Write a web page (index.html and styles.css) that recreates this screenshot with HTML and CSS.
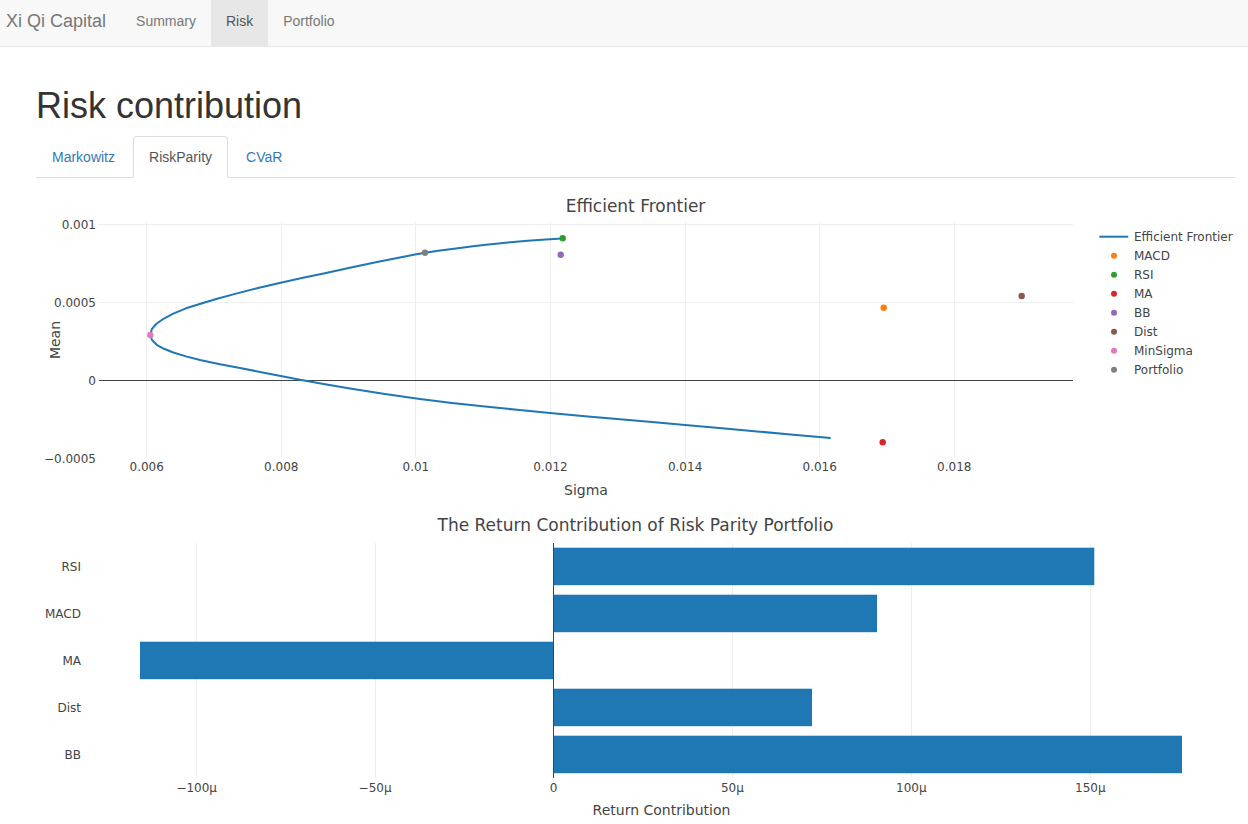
FILE: index.html
```html
<!DOCTYPE html>
<html lang="en">
<head>
<meta charset="utf-8">
<title>Xi Qi Capital - Risk</title>
<link rel="stylesheet" href="styles.css">
</head>
<body>
<nav class="navbar">
  <a class="brand" href="#">Xi Qi Capital</a>
  <ul class="nav-links">
    <li><a href="#">Summary</a></li>
    <li class="active"><a href="#">Risk</a></li>
    <li><a href="#">Portfolio</a></li>
  </ul>
</nav>
<main class="content">
  <h1 class="page-title">Risk contribution</h1>
  <ul class="tabs">
    <li><a href="#">Markowitz</a></li>
    <li class="active"><a href="#">RiskParity</a></li>
    <li><a href="#">CVaR</a></li>
  </ul>

  <svg class="chart chart-frontier" width="1199" height="332" viewBox="0 0 1199 332">
    <text class="chart-title" x="599.5" y="33.5" text-anchor="middle">Efficient Frontier</text>
    <g class="grid">
      <line x1="110.5" y1="44" x2="110.5" y2="280"/>
      <line x1="245.5" y1="44" x2="245.5" y2="280"/>
      <line x1="379.5" y1="44" x2="379.5" y2="280"/>
      <line x1="514.5" y1="44" x2="514.5" y2="280"/>
      <line x1="649.5" y1="44" x2="649.5" y2="280"/>
      <line x1="783.5" y1="44" x2="783.5" y2="280"/>
      <line x1="918.5" y1="44" x2="918.5" y2="280"/>
      <line x1="63" y1="46.5" x2="1037" y2="46.5"/>
      <line x1="63" y1="124.5" x2="1037" y2="124.5"/>
    </g>
    <line class="zero" x1="63" y1="202.5" x2="1037" y2="202.5"/>
    <g class="ticks" text-anchor="end">
      <text x="60" y="51">0.001</text>
      <text x="60" y="129">0.0005</text>
      <text x="60" y="207">0</text>
      <text x="60" y="285">−0.0005</text>
    </g>
    <g class="ticks" text-anchor="middle">
      <text x="110.7" y="293">0.006</text>
      <text x="245.3" y="293">0.008</text>
      <text x="379.9" y="293">0.01</text>
      <text x="514.5" y="293">0.012</text>
      <text x="649.1" y="293">0.014</text>
      <text x="783.7" y="293">0.016</text>
      <text x="918.3" y="293">0.018</text>
    </g>
    <text class="axis-title" x="550" y="316.5" text-anchor="middle">Sigma</text>
    <text class="axis-title" x="0" y="0" text-anchor="middle" transform="translate(24 162) rotate(-90)">Mean</text>

    <polyline class="frontier" points="526,60.5 510,61.4 495,62.5 480,63.7 465,65.2 450,66.8 435,68.6 420,70.5 404,72.5 389,74.7 379,76.5 360,80.3 341,84 315,89.5 290,95 267,99.8 244.7,104.7 222,110 200,115.6 182,120.5 164.6,125.8 150,130.3 137.3,135.6 127.4,140.8 120.2,146 115.8,151.2 114.3,157 116,162 120.7,166.8 128,170.8 137.3,174.5 150,178.4 164,182 184,186.2 204,190 224,193.9 244.7,198 264,201.8 289,206.3 314,210.5 349,216.1 384,221 416,225 449,228.5 481,231.8 514,235 549,238.3 584,241.3 616,244.1 649,247 686,250.3 724,253.7 760,256.9 794.7,260"/>

    <circle cx="847.7" cy="129.7" r="3.2" fill="#ff7f0e"/>
    <circle cx="526.7" cy="60.3" r="3.2" fill="#2ca02c"/>
    <circle cx="846.7" cy="264.3" r="3.2" fill="#d62728"/>
    <circle cx="524.7" cy="76.7" r="3.2" fill="#9467bd"/>
    <circle cx="985.7" cy="118" r="3.2" fill="#8c564b"/>
    <circle cx="114.3" cy="157" r="3.2" fill="#e377c2"/>
    <circle cx="389" cy="74.7" r="3.2" fill="#7f7f7f"/>

    <g class="legend">
      <line class="legend-line" x1="1063.3" y1="58.7" x2="1092.3" y2="58.7"/>
      <text x="1098" y="63">Efficient Frontier</text>
      <circle cx="1078" cy="77.7" r="3" fill="#ff7f0e"/>
      <text x="1098" y="82">MACD</text>
      <circle cx="1078" cy="96.7" r="3" fill="#2ca02c"/>
      <text x="1098" y="101">RSI</text>
      <circle cx="1078" cy="115.7" r="3" fill="#d62728"/>
      <text x="1098" y="120">MA</text>
      <circle cx="1078" cy="134.7" r="3" fill="#9467bd"/>
      <text x="1098" y="139">BB</text>
      <circle cx="1078" cy="153.7" r="3" fill="#8c564b"/>
      <text x="1098" y="158">Dist</text>
      <circle cx="1078" cy="172.7" r="3" fill="#e377c2"/>
      <text x="1098" y="177">MinSigma</text>
      <circle cx="1078" cy="191.7" r="3" fill="#7f7f7f"/>
      <text x="1098" y="196">Portfolio</text>
    </g>
  </svg>

  <svg class="chart chart-bars" width="1199" height="314" viewBox="0 0 1199 314">
    <text class="chart-title" x="599.5" y="21" text-anchor="middle">The Return Contribution of Risk Parity Portfolio</text>
    <g class="grid">
      <line x1="160.5" y1="33" x2="160.5" y2="268"/>
      <line x1="339.5" y1="33" x2="339.5" y2="268"/>
      <line x1="696.5" y1="33" x2="696.5" y2="268"/>
      <line x1="875.5" y1="33" x2="875.5" y2="268"/>
      <line x1="1054.5" y1="33" x2="1054.5" y2="268"/>
    </g>
    <g class="bars">
      <rect x="517.5" y="37.7" width="540.8" height="37.5"/>
      <rect x="517.5" y="84.7" width="323.5" height="37.5"/>
      <rect x="104" y="131.7" width="413.5" height="37.5"/>
      <rect x="517.5" y="178.7" width="258.5" height="37.5"/>
      <rect x="517.5" y="225.7" width="628.5" height="37.5"/>
    </g>
    <line class="zero" x1="517.5" y1="33" x2="517.5" y2="268"/>
    <g class="ticks" text-anchor="end">
      <text x="45" y="60.5">RSI</text>
      <text x="45" y="107.5">MACD</text>
      <text x="45" y="154.5">MA</text>
      <text x="45" y="201.5">Dist</text>
      <text x="45" y="248.5">BB</text>
    </g>
    <g class="ticks" text-anchor="middle">
      <text x="160.7" y="281.5">−100µ</text>
      <text x="339.1" y="281.5">−50µ</text>
      <text x="517.5" y="281.5">0</text>
      <text x="696.4" y="281.5">50µ</text>
      <text x="875.3" y="281.5">100µ</text>
      <text x="1054.3" y="281.5">150µ</text>
    </g>
    <text class="axis-title" x="625.5" y="305" text-anchor="middle">Return Contribution</text>
  </svg>
</main>
</body>
</html>
```
FILE: styles.css
```css
html, body {
  margin: 0;
  padding: 0;
  background: #fff;
}

body {
  font-family: "Liberation Sans", Arial, sans-serif;
  font-size: 14px;
  line-height: 20px;
  color: #333;
  overflow: hidden;
}

a {
  text-decoration: none;
}

/* Navbar */
.navbar {
  display: flex;
  align-items: stretch;
  height: 46px;
  background: #f8f8f8;
  border-bottom: 1px solid #e7e7e7;
}

.brand {
  display: block;
  padding: 11px 15px 15px 6px;
  font-size: 18px;
  line-height: 20px;
  color: #777;
}

.nav-links {
  display: flex;
  margin: 0;
  padding: 0;
  list-style: none;
}

.nav-links a {
  display: block;
  height: 46px;
  box-sizing: border-box;
  padding: 11px 15px 15px;
  color: #777;
}

.nav-links .active a {
  background: #e7e7e7;
  color: #555;
}

/* Content */
.content {
  padding: 0 13px 0 36px;
}

.page-title {
  margin: 39px 0 10px;
  font-size: 36px;
  font-weight: 500;
  line-height: 1.1;
  color: #333;
}

.tabs {
  display: flex;
  margin: 0;
  padding: 0;
  list-style: none;
  border-bottom: 1px solid #ddd;
}

.tabs li {
  margin-bottom: -1px;
}

.tabs a {
  display: block;
  margin-right: 2px;
  padding: 10px 15px;
  line-height: 20px;
  border: 1px solid transparent;
  border-radius: 4px 4px 0 0;
  color: #337ab7;
}

.tabs .active a {
  color: #555;
  background: #fff;
  border-color: #ddd;
  border-bottom-color: transparent;
}

/* Charts */
.chart {
  display: block;
}

.chart text {
  font-family: "DejaVu Sans", Verdana, sans-serif;
  fill: #444;
}

.chart .chart-title {
  font-size: 17px;
}

.chart .ticks text,
.chart .legend text {
  font-size: 12px;
}

.chart .axis-title {
  font-size: 14px;
}

.grid line {
  stroke: #eee;
  stroke-width: 1;
  shape-rendering: crispEdges;
}

.zero {
  stroke: #444;
  stroke-width: 1;
  shape-rendering: crispEdges;
}

.frontier {
  fill: none;
  stroke: #1f77b4;
  stroke-width: 2;
  stroke-linejoin: round;
  stroke-linecap: butt;
}

.legend-line {
  stroke: #1f77b4;
  stroke-width: 2;
}

.bars rect {
  fill: #1f77b4;
}
```
